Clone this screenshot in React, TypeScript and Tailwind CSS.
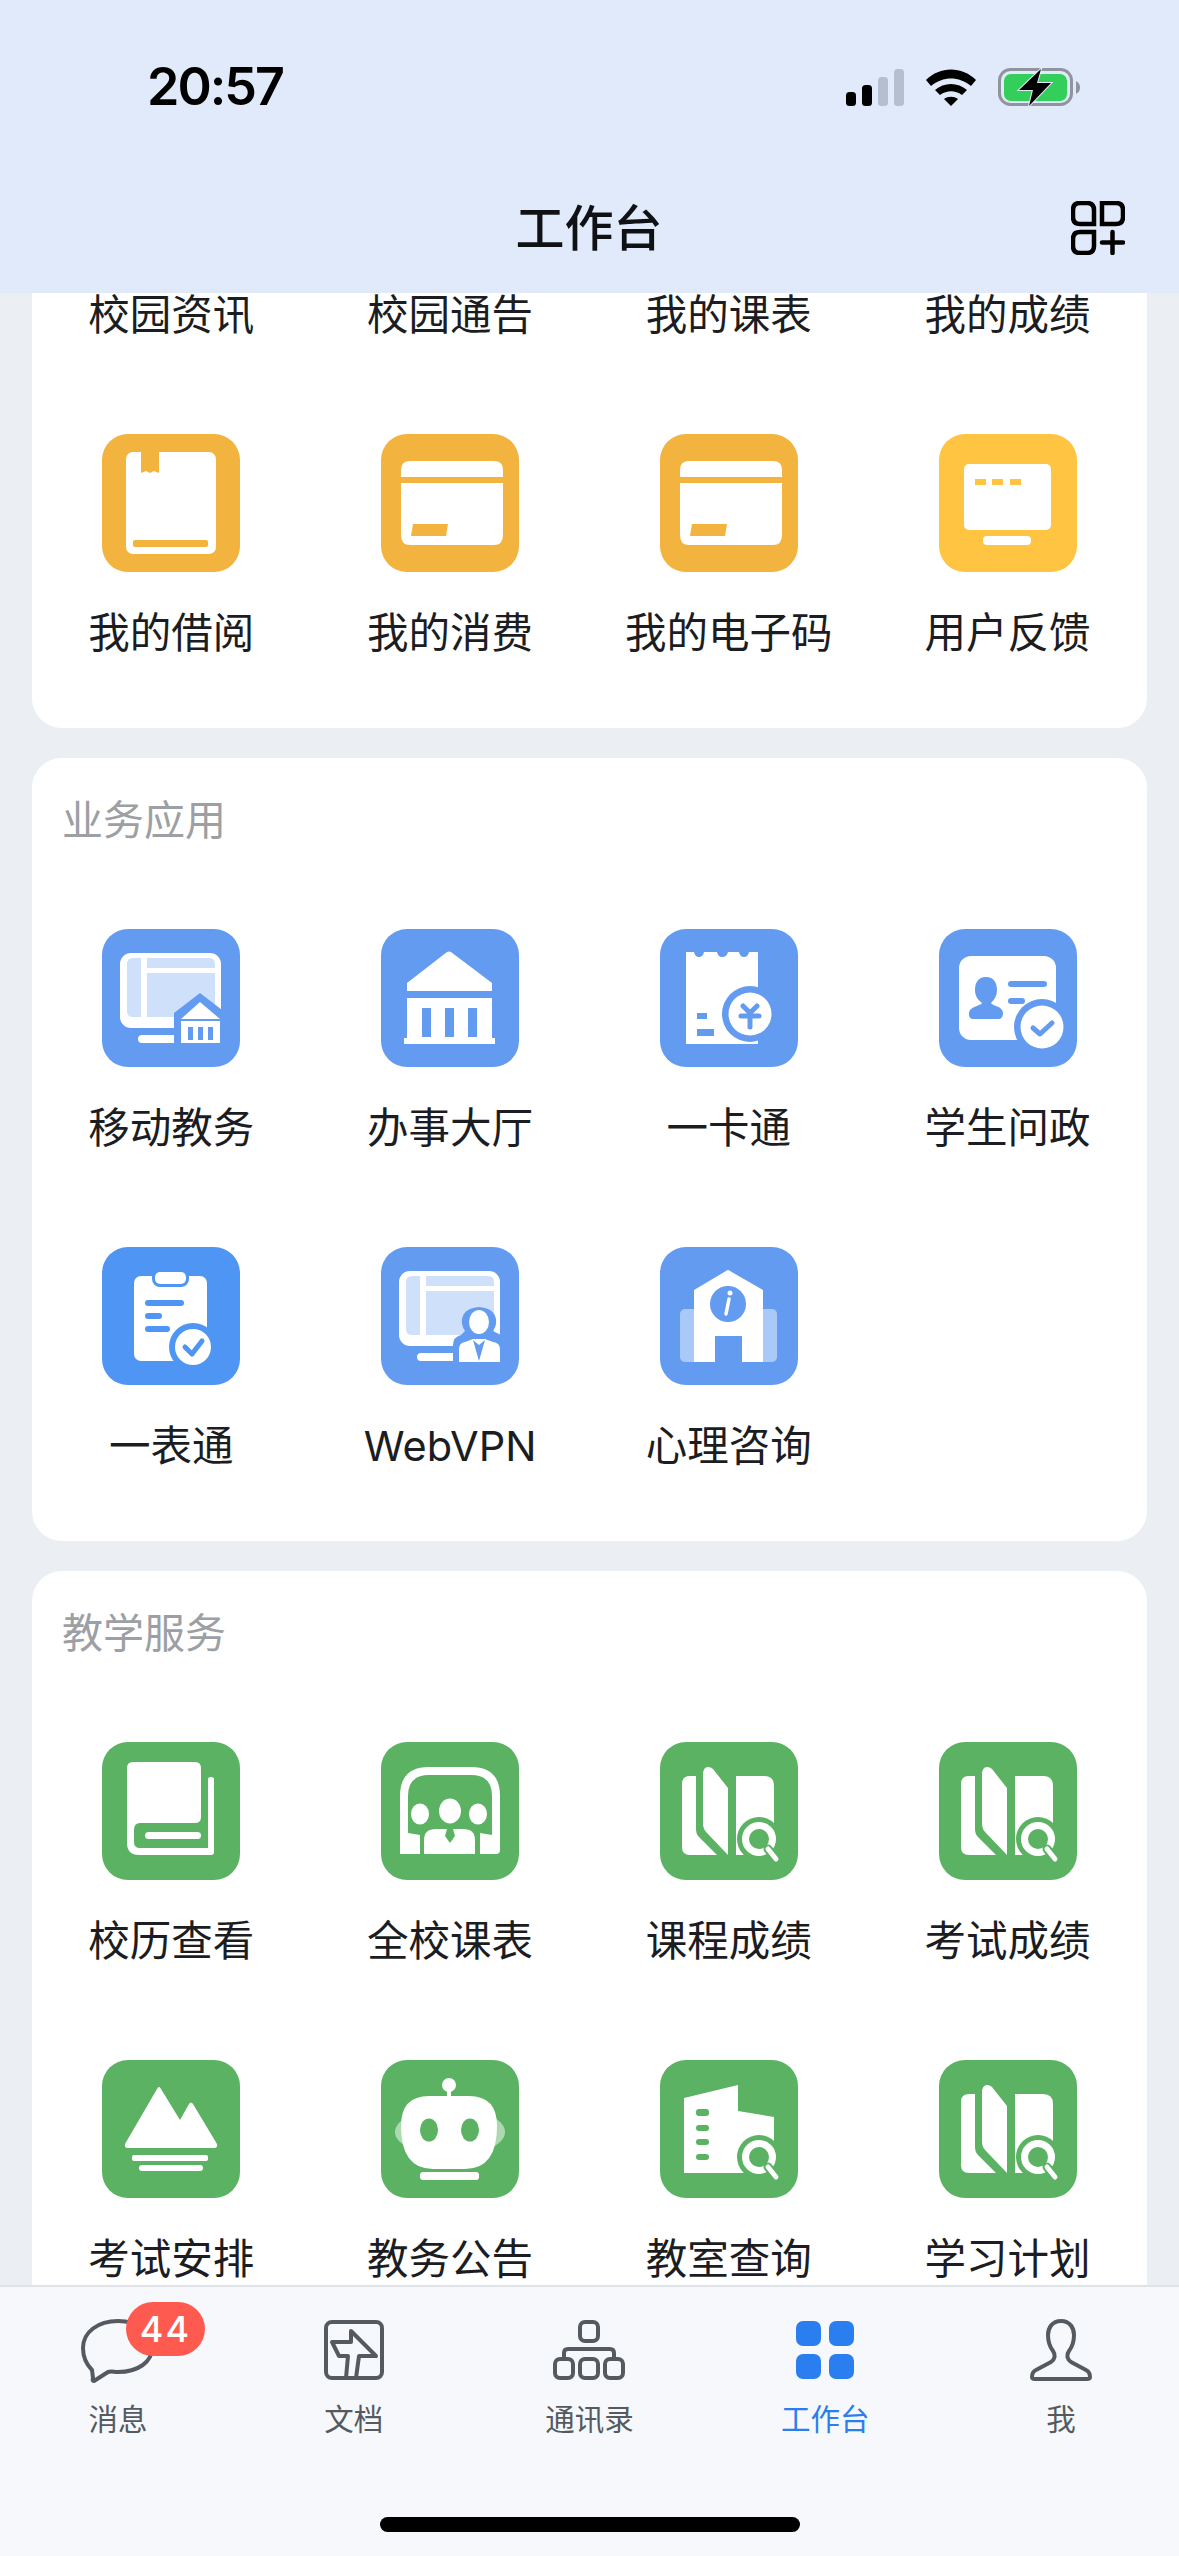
import type { ReactNode } from 'react';

const BLUE = '#639bf1';
const SKY = '#4f95f3';
const AMBER = '#f2b33f';
const YELLOW = '#ffc442';
const GREEN = '#5ab262';
const PALE = '#cfe0fb';

const Glyph = ({ children }: { children: ReactNode }) => (
  <svg viewBox="0 0 138 138" className="block h-[138px] w-[138px]" fill="#fff">
    {children}
  </svg>
);

const Monitor = () => (
  <>
    <rect x="18" y="24" width="101" height="75" rx="11" />
    <path d="M25 35 q0-6 6-6 h8 v59 h-8 q-6 0-6-6 Z" fill={PALE} />
    <path d="M45 29 h62 q6 0 6 6 v4 h-68 Z" fill={PALE} />
    <rect x="45" y="44" width="68" height="44" fill={PALE} />
    <rect x="36" y="106" width="42" height="8" rx="4" />
  </>
);

const BookIcon = () => (
  <Glyph>
    <rect x="24" y="18" width="90" height="102" rx="7" />
    <path d="M39 18 h18 v21 l-5 -2 l-4 2 l-4 -2 l-5 2 Z" fill={AMBER} />
    <rect x="31" y="106" width="75" height="7" rx="2" fill={AMBER} />
  </Glyph>
);

const CardIcon = () => (
  <Glyph>
    <path d="M20 43 v-7 q0-9 9-9 h84 q9 0 9 9 v7 Z" />
    <path d="M20 49 h102 v52 q0 10-9 10 h-84 q-9 0-9-10 Z" />
    <path d="M32 90 h35 l-2 12 h-35 Z" fill={AMBER} />
  </Glyph>
);

const FeedbackIcon = () => (
  <Glyph>
    <rect x="25" y="30" width="87" height="66" rx="5" />
    <rect x="36" y="45" width="11" height="6" fill={YELLOW} />
    <rect x="53" y="45" width="11" height="6" fill={YELLOW} />
    <rect x="71" y="45" width="11" height="6" fill={YELLOW} />
    <rect x="44" y="102" width="48" height="9" rx="4" />
  </Glyph>
);

const AffairsIcon = () => (
  <Glyph>
    <Monitor />
    <path d="M72 114 V84 L98 64 L124 84 V114 Z" fill={BLUE} />
    <path d="M79 90 L98 73 L118 90 Z" />
    <rect x="79" y="92" width="39" height="22" />
    <rect x="86" y="98" width="5" height="13" fill={BLUE} />
    <rect x="96" y="98" width="5" height="13" fill={BLUE} />
    <rect x="106" y="98" width="5" height="13" fill={BLUE} />
  </Glyph>
);

const HallIcon = () => (
  <Glyph>
    <path d="M26 54 L66 23 Q68 22 70 23 L111 54 V62 H26 Z" />
    <path d="M26 69 H111 V109 H114 V115 H23 V109 H26 Z" />
    <rect x="41" y="79" width="9" height="29" fill={BLUE} />
    <rect x="64" y="79" width="9" height="29" fill={BLUE} />
    <rect x="87" y="79" width="9" height="29" fill={BLUE} />
  </Glyph>
);

const CampusCardIcon = () => (
  <Glyph>
    <path d="M26 23 H34 Q35 28 39 28 Q43 28 44 23 H57 Q58 28 62 28 Q67 28 68 23 H79 Q80 28 84 28 Q88 28 89 23 H98 V115 H26 Z" />
    <rect x="37" y="84" width="10" height="6" fill={BLUE} />
    <rect x="37" y="100" width="17" height="7" fill={BLUE} />
    <circle cx="90" cy="85" r="28" fill={BLUE} />
    <circle cx="90" cy="85" r="21.5" />
    <path d="M83 77 L90 84 L97 77 M81 87 H99 M90 84 V98" fill="none" stroke={BLUE} strokeWidth="5" strokeLinecap="round" />
  </Glyph>
);

const StudentIcon = () => (
  <Glyph>
    <rect x="20" y="27" width="97" height="84" rx="12" />
    <path d="M47 48 C55 48 58 54 58 61 C58 67 55 71 52 74 C53 77 64 77 64 84 C64 88 62 90 60 90 H34 C31 90 30 88 30 85 C30 77 42 77 43 74 C39 71 36 67 36 61 C36 54 39 48 47 48 Z" fill={BLUE} />
    <rect x="69" y="52" width="39" height="6" rx="3" fill={BLUE} />
    <rect x="69" y="69" width="17" height="6" rx="3" fill={BLUE} />
    <circle cx="103" cy="98" r="28" fill={BLUE} />
    <circle cx="103" cy="98" r="21.5" />
    <path d="M94 99 L101 105 L113 94" fill="none" stroke={BLUE} strokeWidth="5" strokeLinecap="round" strokeLinejoin="round" />
  </Glyph>
);

const FormIcon = () => (
  <Glyph>
    <rect x="32" y="29" width="73" height="85" rx="7" />
    <rect x="50" y="22" width="37" height="18" rx="8" fill={SKY} />
    <rect x="53" y="25" width="31" height="12" rx="5" />
    <rect x="43" y="53" width="39" height="6" rx="3" fill={SKY} />
    <rect x="43" y="66" width="17" height="6" rx="3" fill={SKY} />
    <rect x="43" y="79" width="25" height="6" rx="3" fill={SKY} />
    <circle cx="91" cy="100" r="24" fill={SKY} />
    <circle cx="91" cy="100" r="18" />
    <path d="M83 100 L90 107 L100 94" fill="none" stroke={SKY} strokeWidth="5" strokeLinecap="round" strokeLinejoin="round" />
  </Glyph>
);

const VpnIcon = () => (
  <Glyph>
    <Monitor />
    <path d="M72 116 V98 Q72 90 80 88 L84 84 Q80 78 81 72 Q83 61 98 60 Q113 61 115 72 Q116 78 112 84 L120 88 V116 Z" fill={BLUE} />
    <ellipse cx="98" cy="75" rx="10" ry="12" />
    <path d="M78 115 V102 Q78 96 84 95 L92 92 H104 L112 95 Q119 96 119 102 V115 Z" />
    <path d="M92 93 L98 114 L104 93 L98 98 Z" fill={BLUE} />
  </Glyph>
);

const CounselIcon = () => (
  <Glyph>
    <rect x="20" y="62" width="97" height="53" rx="5" fill="#a9c9f9" />
    <path d="M34 43 L66 24 Q68 22 70 24 L103 43 V115 H34 Z" />
    <rect x="55" y="89" width="27" height="26" fill={BLUE} />
    <circle cx="68" cy="57" r="18" fill={BLUE} />
    <circle cx="70" cy="46" r="2.5" />
    <path d="M69 52 L66 67" fill="none" stroke="#fff" strokeWidth="3.5" strokeLinecap="round" />
  </Glyph>
);

const CalendarIcon = () => (
  <Glyph>
    <path d="M31 20 H93 Q99 20 99 26 V75 Q99 81 93 81 H38 Q32 81 32 88 V100 Q32 106 38 106 H106 V37 Q106 35 109 35 Q112 35 112 37 V110 Q112 113 109 113 H37 Q25 113 25 101 V26 Q25 20 31 20 Z" />
    <rect x="43" y="90" width="56" height="7" rx="3.5" />
  </Glyph>
);

const ClassroomIcon = () => (
  <Glyph>
    <path d="M19 112 V54 Q19 25 48 25 H90 Q119 25 119 54 V108 Q119 112 115 112 H99 V91 L111 93 V54 Q111 33 90 33 H48 Q27 33 27 54 V91 L39 93 V112 Z" />
    <ellipse cx="69" cy="69" rx="11" ry="12.5" />
    <ellipse cx="39" cy="72" rx="9" ry="10.5" />
    <ellipse cx="97" cy="72" rx="9" ry="10.5" />
    <path d="M43 112 V98 Q43 87 55 87 H82 Q94 87 94 98 V112 Z" />
    <path d="M66 87 H72 L74 94 L69 101 L64 94 Z" fill={GREEN} />
  </Glyph>
);

const Magnifier = () => (
  <>
    <circle cx="99" cy="97" r="22" fill={GREEN} />
    <circle cx="99" cy="97" r="13.5" fill="none" stroke="#fff" strokeWidth="7" />
    <path d="M108 107 L116 117" fill="none" stroke={GREEN} strokeWidth="9" strokeLinecap="round" />
    <path d="M108 107 L116 117" fill="none" stroke="#fff" strokeWidth="5" strokeLinecap="round" />
  </>
);

const GradesIcon = () => (
  <Glyph>
    <path d="M36 34 V88 Q36 92 39 95 L57 113 H30 Q22 113 22 105 V42 Q22 34 30 34 Z" />
    <path d="M43 33 Q43 25 48 25 Q51 25 53 27 L68 46 V113 L47 91 Q43 87 43 82 Z" />
    <path d="M76 34 H104 Q114 34 114 44 V113 H76 Z" />
    <Magnifier />
  </Glyph>
);

const ExamIcon = () => (
  <Glyph>
    <path d="M23 84 L55 29 Q57 25 59 29 L78 60 L87 44 Q89 41 91 44 L115 84 Q116 88 112 88 H26 Q22 88 23 84 Z" />
    <rect x="30" y="95" width="76" height="6" rx="2" />
    <rect x="37" y="105" width="64" height="6" rx="3" />
  </Glyph>
);

const RobotIcon = () => (
  <Glyph>
    <ellipse cx="69" cy="72" rx="55" ry="24" opacity="0.5" />
    <ellipse cx="68" cy="25" rx="7" ry="7" />
    <rect x="66" y="28" width="4" height="10" />
    <path d="M48 36 H88 Q116 36 116 66 Q116 109 84 109 H52 Q20 109 20 66 Q20 36 48 36 Z" />
    <ellipse cx="48" cy="70" rx="9" ry="11.5" fill={GREEN} />
    <ellipse cx="89" cy="70" rx="9" ry="11.5" fill={GREEN} />
    <rect x="39" y="112" width="59" height="8" rx="3" />
  </Glyph>
);

const RoomIcon = () => (
  <Glyph>
    <path d="M24 38 L78 25 V51 L114 57 V113 H24 Z" />
    <rect x="36" y="49" width="13" height="7" rx="3" fill={GREEN} />
    <rect x="36" y="65" width="13" height="6" rx="3" fill={GREEN} />
    <rect x="36" y="79" width="13" height="6" rx="3" fill={GREEN} />
    <rect x="36" y="94" width="13" height="6" rx="3" fill={GREEN} />
    <Magnifier />
  </Glyph>
);

type Entry = { label: string; tile?: string; icon?: ReactNode };

const Cell = ({ app }: { app: Entry }) => (
  <div className="flex flex-col items-center">
    <div className={`h-[138px] w-[138px] overflow-hidden rounded-[26px] ${app.tile ?? ''}`}>{app.icon}</div>
    <span className="mt-[40px] whitespace-nowrap text-[41.5px] leading-[42px] text-[#1b1d22]">{app.label}</span>
  </div>
);

const Card = ({ title, apps, top }: { title?: string; apps: Entry[]; top: string }) => (
  <section className={`rounded-[30px] bg-white pb-[74px] ${top}`}>
    {title && <h2 className="mb-[81px] pl-[30px] text-[41px] font-normal leading-[56px] text-[#9c9fa3]">{title}</h2>}
    <div className="grid grid-cols-4 gap-y-[98px]">
      {apps.map((app) => (
        <Cell key={app.label} app={app} />
      ))}
    </div>
  </section>
);

const campus: Entry[] = [
  { label: '校园资讯', tile: 'bg-[#639bf1]' },
  { label: '校园通告', tile: 'bg-[#639bf1]' },
  { label: '我的课表', tile: 'bg-[#639bf1]' },
  { label: '我的成绩', tile: 'bg-[#639bf1]' },
  { label: '我的借阅', tile: 'bg-[#f2b33f]', icon: <BookIcon /> },
  { label: '我的消费', tile: 'bg-[#f2b33f]', icon: <CardIcon /> },
  { label: '我的电子码', tile: 'bg-[#f2b33f]', icon: <CardIcon /> },
  { label: '用户反馈', tile: 'bg-[#ffc442]', icon: <FeedbackIcon /> },
];

const business: Entry[] = [
  { label: '移动教务', tile: 'bg-[#639bf1]', icon: <AffairsIcon /> },
  { label: '办事大厅', tile: 'bg-[#639bf1]', icon: <HallIcon /> },
  { label: '一卡通', tile: 'bg-[#639bf1]', icon: <CampusCardIcon /> },
  { label: '学生问政', tile: 'bg-[#639bf1]', icon: <StudentIcon /> },
  { label: '一表通', tile: 'bg-[#4f95f3]', icon: <FormIcon /> },
  { label: 'WebVPN', tile: 'bg-[#639bf1]', icon: <VpnIcon /> },
  { label: '心理咨询', tile: 'bg-[#639bf1]', icon: <CounselIcon /> },
];

const teaching: Entry[] = [
  { label: '校历查看', tile: 'bg-[#5ab262]', icon: <CalendarIcon /> },
  { label: '全校课表', tile: 'bg-[#5ab262]', icon: <ClassroomIcon /> },
  { label: '课程成绩', tile: 'bg-[#5ab262]', icon: <GradesIcon /> },
  { label: '考试成绩', tile: 'bg-[#5ab262]', icon: <GradesIcon /> },
  { label: '考试安排', tile: 'bg-[#5ab262]', icon: <ExamIcon /> },
  { label: '教务公告', tile: 'bg-[#5ab262]', icon: <RobotIcon /> },
  { label: '教室查询', tile: 'bg-[#5ab262]', icon: <RoomIcon /> },
  { label: '学习计划', tile: 'bg-[#5ab262]', icon: <GradesIcon /> },
];

const StatusIcons = () => (
  <div className="flex items-center gap-[22px]">
    <svg width="58" height="37" viewBox="0 0 58 37">
      <rect x="0" y="23" width="10" height="14" rx="3.5" fill="#000" />
      <rect x="16" y="16" width="10" height="21" rx="3.5" fill="#000" />
      <rect x="32" y="8" width="10" height="29" rx="3.5" fill="#b5bfcd" />
      <rect x="48" y="0" width="10" height="37" rx="3.5" fill="#b5bfcd" />
    </svg>
    <svg width="50" height="37" viewBox="0 0 50 37" fill="#000">
      <path d="M0 11 C14 -3 36 -3 50 11 L45 17 C33 7 17 7 5 17 Z" />
      <path d="M9 21 C18 13 32 13 41 21 L36 26 C29 21 21 21 14 26 Z" />
      <path d="M18 30 C22 27 28 27 32 30 L25 37 Z" />
    </svg>
    <svg width="83" height="39" viewBox="0 0 83 39">
      <rect x="1.5" y="1.5" width="72" height="35" rx="11" fill="none" stroke="#8f949f" strokeWidth="3" />
      <rect x="6" y="6" width="63" height="27" rx="7" fill="#34ce5b" />
      <path d="M78 13 Q82 15 82 19.5 Q82 24 78 26 Z" fill="#8f949f" />
      <path d="M43 1 L21 22 H35 L31 38 L53 15 H39 Z" fill="#000" stroke="#e0eafa" strokeWidth="2" paintOrder="stroke" />
    </svg>
  </div>
);

const tabStroke = {
  fill: 'none',
  stroke: '#555a60',
  strokeWidth: 4,
  strokeLinejoin: 'round' as const,
  strokeLinecap: 'round' as const,
};

const tabs: { label: string; active?: boolean; badge?: string; icon: ReactNode }[] = [
  {
    label: '消息',
    badge: '44',
    icon: (
      <svg width="76" height="70" viewBox="0 0 76 70" {...tabStroke}>
        <path d="M12 55 C6 49 3 41 3 33 C3 17 18 6 38 6 C58 6 72 17 72 33 C72 47 58 57 38 57 C34 57 31 56 28 57 L14 66 Q12 66 13 63 Z" />
      </svg>
    ),
  },
  {
    label: '文档',
    icon: (
      <svg width="60" height="60" viewBox="0 0 60 60" {...tabStroke}>
        <rect x="2" y="2" width="56" height="56" rx="6" />
        <path d="M22 58 L24 36 H15 L8 22 H27 V11 L52 36 H35 L32 58" strokeLinecap="butt" />
      </svg>
    ),
  },
  {
    label: '通讯录',
    icon: (
      <svg width="72" height="60" viewBox="0 0 72 60" {...tabStroke}>
        <rect x="27" y="2" width="18" height="19" rx="5" />
        <path d="M11 38 V33 Q11 29 15 29 H57 Q61 29 61 33 V38" />
        <rect x="2" y="39" width="18" height="19" rx="5" />
        <rect x="27" y="39" width="18" height="19" rx="5" />
        <rect x="52" y="39" width="18" height="19" rx="5" />
      </svg>
    ),
  },
  {
    label: '工作台',
    active: true,
    icon: (
      <svg width="58" height="60" viewBox="0 0 58 60" fill="#2b7ef0">
        <rect x="0" y="1" width="25" height="25" rx="7" />
        <rect x="33" y="1" width="25" height="25" rx="7" />
        <rect x="0" y="34" width="25" height="25" rx="7" />
        <rect x="33" y="34" width="25" height="25" rx="7" />
      </svg>
    ),
  },
  {
    label: '我',
    icon: (
      <svg width="62" height="62" viewBox="0 0 62 62" {...tabStroke}>
        <path d="M31 2 C22 2 18 9 18 16 C18 24 20 28 23 32 C26 36 25 40 21 43 L6 51 C2 53 2 56 2 58 Q2 60 5 60 H57 Q60 60 60 58 C60 56 60 53 56 51 L41 43 C37 40 36 36 39 32 C42 28 44 24 44 16 C44 9 40 2 31 2 Z" />
      </svg>
    ),
  },
];

export default function App() {
  return (
    <div className="flex h-[2556px] w-[1179px] flex-col overflow-hidden bg-[#ebeff4] font-['Inter','Noto_Sans_CJK_SC',sans-serif]">
      <header className="z-10 h-[293px] shrink-0 bg-[#e0eafa] pt-[62px]">
        <div className="flex h-[50px] items-center justify-between pl-[147px] pr-[98px]">
          <span className="text-[52px] font-semibold leading-none tracking-[-2px] text-black">20:57</span>
          <StatusIcons />
        </div>
        <div className="mt-[76px] grid h-[80px] grid-cols-3 items-center pr-[54px]">
          <span />
          <h1 className="pl-[53px] text-center text-[49px] font-medium leading-none text-[#101114]">工作台</h1>
          <svg className="justify-self-end" width="54" height="54" viewBox="0 0 54 54" fill="none" stroke="#000" strokeWidth="4.5">
            <path d="M9 2 H16 Q23 2 23 9 V23 H9 Q2 23 2 16 V9 Q2 2 9 2 Z" />
            <path d="M31 2 H45 Q52 2 52 9 V16 Q52 23 45 23 H31 Z" />
            <path d="M9 31 H23 V45 Q23 52 16 52 H9 Q2 52 2 45 V38 Q2 31 9 31 Z" />
            <path d="M31 41.5 H52 M41.5 31 V52" strokeLinecap="round" />
          </svg>
        </div>
      </header>

      <main className="min-h-0 flex-1 overflow-hidden px-[32px]">
        <Card apps={campus} top="-mt-[217px] pt-[40px]" />
        <Card title="业务应用" apps={business} top="mt-[30px] pt-[34px]" />
        <Card title="教学服务" apps={teaching} top="mt-[30px] pt-[34px]" />
      </main>

      <nav className="h-[271px] shrink-0 border-t-2 border-[#dfe2e7] bg-[#f6f8fc]">
        <div className="grid grid-cols-5 pt-[32px]">
          {tabs.map((tab) => (
            <div key={tab.label} className="flex flex-col items-center">
              <div className="relative flex h-[62px] items-center justify-center">
                {tab.icon}
                {tab.badge && (
                  <span className="absolute left-[46px] top-[-17px] flex h-[54px] w-[79px] items-center justify-center rounded-full bg-[#ff5a4f] text-[36px] font-medium leading-none tracking-[2px] text-white">
                    {tab.badge}
                  </span>
                )}
              </div>
              <span className={`mt-[18px] text-[29.5px] leading-[40px] ${tab.active ? 'text-[#2b7ef0]' : 'text-[#555a60]'}`}>
                {tab.label}
              </span>
            </div>
          ))}
        </div>
        <div className="mx-auto mt-[78px] h-[15px] w-[420px] rounded-full bg-black" />
      </nav>
    </div>
  );
}
